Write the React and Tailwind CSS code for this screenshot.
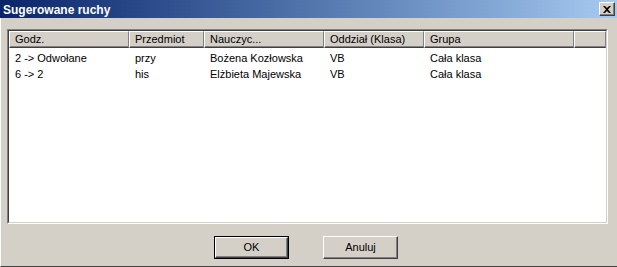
import React from "react";

const columns = [
    { label: "Godz.", w: "w-[120px]" },
    { label: "Przedmiot", w: "w-[75px]" },
    { label: "Nauczyc...", w: "w-[120px]" },
    { label: "Oddział (Klasa)", w: "w-[100px]" },
    { label: "Grupa", w: "w-[150px]" },
];

const rows = [
    ["2 -> Odwołane", "przy", "Bożena Kozłowska", "VB", "Cała klasa"],
    ["6 -> 2", "his", "Elżbieta Majewska", "VB", "Cała klasa"],
];

const HeaderCell = ({ children, w }) => (
    <div className={`${w} h-[17px] shrink-0 flex items-center pl-[5px] border-t border-l border-white border-r border-r-[#808080] border-b border-b-[#404040] shadow-[inset_0_-1px_0_#808080]`}>
        {children}
    </div>
);

const Button = ({ children, isDefault }) => (
    <div className={isDefault ? "border border-black" : ""}>
        <button
            className={`${isDefault ? "w-[73px] h-[21px]" : "w-[75px] h-[23px]"} flex items-center justify-center border-t border-l border-white border-r border-b border-r-[#404040] border-b-[#404040] shadow-[inset_-1px_-1px_0_#808080] bg-[#d4d0c8] text-black`}
        >
            {children}
        </button>
    </div>
);

export default function App() {
    return (
        <div
            className="w-[617px] h-[267px] flex flex-col bg-[#d4d0c8] text-[11px] text-black overflow-hidden"
            style={{ fontFamily: '"Liberation Sans", Arial, sans-serif' }}
        >
            {/* title bar */}
            <div className="h-[18px] shrink-0 flex items-center justify-between bg-gradient-to-r from-[#0a246a] to-[#a6caf0] pl-[3px] pr-[2px]">
                <span className="text-white font-bold text-[12px] leading-none pt-[1px]">Sugerowane ruchy</span>
                <div className="w-[16px] h-[14px] flex items-center justify-center bg-[#d4d0c8] border-t border-l border-white border-r border-b border-r-[#404040] border-b-[#404040] shadow-[inset_-1px_-1px_0_#808080]">
                    <svg width="8" height="7" viewBox="0 0 8 7">
                        <path d="M0 0h2l2 2 2-2h2L5 3.5 8 7H6L4 5 2 7H0l3-3.5z" fill="#000" />
                    </svg>
                </div>
            </div>

            {/* body */}
            <div className="flex-1 flex flex-col border-l border-white border-b border-b-[#404040]">
                <div className="ml-[6px] mr-[9px] mt-[11px] h-[195px] border-t border-l border-[#808080] border-r border-b border-r-white border-b-white">
                    <div className="h-full border-t border-l border-[#404040] border-r border-b border-r-[#d4d0c8] border-b-[#d4d0c8] bg-white flex flex-col">
                        <div className="flex bg-[#d4d0c8]">
                            {columns.map((c) => (
                                <HeaderCell key={c.label} w={c.w}>
                                    {c.label}
                                </HeaderCell>
                            ))}
                            <HeaderCell w="flex-1" />
                        </div>
                        <div className="pt-[2px] flex flex-col">
                            {rows.map((r, i) => (
                                <div key={i} className="flex h-[16px] items-center">
                                    {r.map((cell, j) => (
                                        <div key={j} className={`${columns[j].w} shrink-0 pl-[6px] whitespace-nowrap`}>
                                            {cell}
                                        </div>
                                    ))}
                                </div>
                            ))}
                        </div>
                    </div>
                </div>

                <div className="flex gap-[34px] mt-[12px] ml-[213px]">
                    <Button isDefault>OK</Button>
                    <Button>Anuluj</Button>
                </div>
            </div>
        </div>
    );
}
